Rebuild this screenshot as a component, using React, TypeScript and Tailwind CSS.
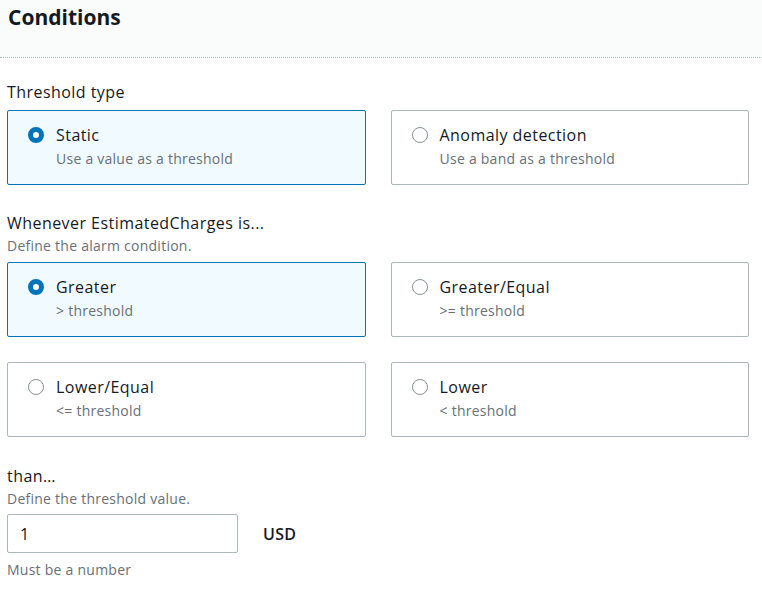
import React from "react";

type Option = { title: string; desc: string; selected?: boolean };

const typeOptions: Option[] = [
  { title: "Static", desc: "Use a value as a threshold", selected: true },
  { title: "Anomaly detection", desc: "Use a band as a threshold" },
];

const conditionOptions: Option[] = [
  { title: "Greater", desc: "> threshold", selected: true },
  { title: "Greater/Equal", desc: ">= threshold" },
  { title: "Lower/Equal", desc: "<= threshold" },
  { title: "Lower", desc: "< threshold" },
];

function Radio({ checked }: { checked?: boolean }) {
  if (checked) {
    return <span className="mt-[3px] block h-4 w-4 shrink-0 rounded-full border-[5px] border-[#0073bb] bg-white" />;
  }
  return <span className="mt-[3px] block h-4 w-4 shrink-0 rounded-full border-[1.5px] border-[#879596] bg-white" />;
}

function Tile({ option }: { option: Option }) {
  return (
    <div
      className={
        option.selected
          ? "flex h-[75px] gap-[12px] rounded-[2px] border border-[#0073bb] bg-[#f1faff] pl-[20px] pt-[13px]"
          : "flex h-[75px] gap-[12px] rounded-[2px] border border-[#aab7b8] bg-white pl-[20px] pt-[13px]"
      }
    >
      <Radio checked={option.selected} />
      <div>
        <div className="text-[16px] leading-[22px] tracking-[0.45px] text-[#16191f]">{option.title}</div>
        <div className="mt-[3px] text-[14px] leading-[20px] tracking-[0.25px] text-[#687078]">{option.desc}</div>
      </div>
    </div>
  );
}

export default function App() {
  return (
    <div className="min-h-[592px] w-[762px] bg-white font-['Open_Sans',sans-serif] text-[#16191f]">
      <div className="h-[58px] border-b border-dotted border-[#aab7b8] bg-[#fafbfb] px-[8px] pt-[2px]">
        <h2 className="text-[21px] font-bold leading-[30px]">Conditions</h2>
      </div>

      <div className="w-[749px] pl-[7px]">
        <div className="mt-[23px] text-[16px] leading-[22px] tracking-[0.45px]">Threshold type</div>
        <div className="mt-[7px] grid grid-cols-2 gap-x-[25px]">
          {typeOptions.map((o) => (
            <Tile key={o.title} option={o} />
          ))}
        </div>

        <div className="mt-[27px] text-[16px] leading-[22px] tracking-[0.45px]">Whenever EstimatedCharges is...</div>
        <div className="mt-[2px] text-[14px] leading-[20px] tracking-[0.25px] text-[#687078]">Define the alarm condition.</div>
        <div className="mt-[6px] grid grid-cols-2 gap-x-[25px] gap-y-[25px]">
          {conditionOptions.map((o) => (
            <Tile key={o.title} option={o} />
          ))}
        </div>

        <div className="mt-[28px] text-[16px] leading-[22px] tracking-[0.45px]">than…</div>
        <div className="mt-[2px] text-[14px] leading-[20px] tracking-[0.25px] text-[#687078]">Define the threshold value.</div>
        <div className="mt-[5px] flex items-center gap-[25px]">
          <input
            defaultValue="1"
            className="h-[39px] w-[231px] rounded-[2px] border border-[#aab7b8] px-[12px] text-[16px] text-[#16191f] outline-none"
          />
          <span className="text-[16px] font-semibold tracking-[0.3px]">USD</span>
        </div>
        <div className="mt-[7px] text-[14px] leading-[20px] tracking-[0.25px] text-[#687078]">Must be a number</div>
      </div>
    </div>
  );
}
